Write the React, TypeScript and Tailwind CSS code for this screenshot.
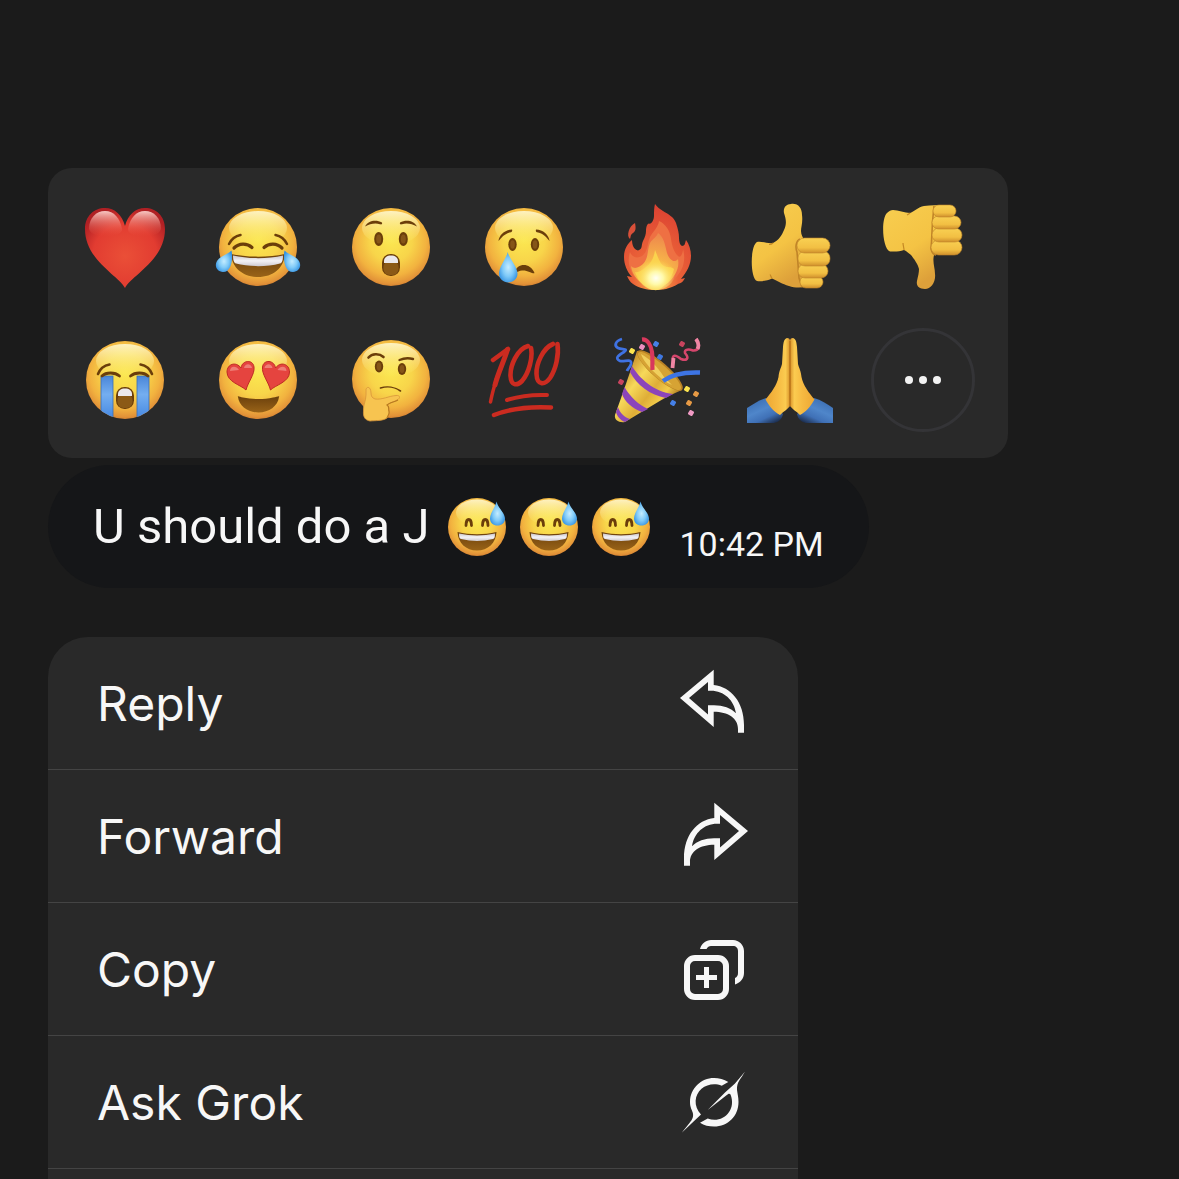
import type { ReactNode } from 'react'

const BROWN = '#6b3e0a'

// gradients shared by all the emoji drawings
function Gradients() {
  return (
    <svg className="absolute h-0 w-0" aria-hidden="true">
      <defs>
        <radialGradient id="face" cx="0.5" cy="0.42" r="0.6">
          <stop offset="0" stopColor="#fbe750" />
          <stop offset="0.45" stopColor="#f8d54a" />
          <stop offset="0.75" stopColor="#f2b23f" />
          <stop offset="0.92" stopColor="#e29238" />
          <stop offset="1" stopColor="#c9772c" />
        </radialGradient>
        <linearGradient id="shine" x1="0" y1="0" x2="0" y2="1">
          <stop offset="0" stopColor="#fffbd8" stopOpacity="0.85" />
          <stop offset="1" stopColor="#fff27a" stopOpacity="0" />
        </linearGradient>
        <radialGradient id="heart" cx="0.5" cy="0.6" r="0.62">
          <stop offset="0" stopColor="#ea4f37" />
          <stop offset="0.65" stopColor="#e23c31" />
          <stop offset="1" stopColor="#b02024" />
        </radialGradient>
        <linearGradient id="heartShine" x1="0" y1="0" x2="0" y2="1">
          <stop offset="0" stopColor="#ffd9d4" stopOpacity="0.9" />
          <stop offset="1" stopColor="#ea4f3c" stopOpacity="0" />
        </linearGradient>
        <radialGradient id="tear" cx="0.5" cy="0.5" r="0.6">
          <stop offset="0" stopColor="#c4ecff" />
          <stop offset="0.5" stopColor="#7fcaf8" />
          <stop offset="1" stopColor="#2b8ce0" />
        </radialGradient>
        <linearGradient id="stream" x1="0" y1="0" x2="0" y2="1">
          <stop offset="0" stopColor="#4a86d8" />
          <stop offset="0.4" stopColor="#74aef0" />
          <stop offset="1" stopColor="#3f83e0" />
        </linearGradient>
        <linearGradient id="teeth" x1="0" y1="0" x2="0" y2="1">
          <stop offset="0" stopColor="#c9c6cc" />
          <stop offset="0.5" stopColor="#f4f2f5" />
          <stop offset="1" stopColor="#cfcbd2" />
        </linearGradient>
        <linearGradient id="mouth" x1="0" y1="0" x2="0" y2="1">
          <stop offset="0" stopColor="#6b400c" />
          <stop offset="1" stopColor="#996318" />
        </linearGradient>
        <linearGradient id="skin" x1="0" y1="0" x2="0.5" y2="1">
          <stop offset="0" stopColor="#f8ce50" />
          <stop offset="0.6" stopColor="#f4c344" />
          <stop offset="1" stopColor="#dda03a" />
        </linearGradient>
        <linearGradient id="finger" x1="0" y1="0" x2="0" y2="1">
          <stop offset="0" stopColor="#f9d153" />
          <stop offset="0.65" stopColor="#f2bf43" />
          <stop offset="1" stopColor="#cf8f2c" />
        </linearGradient>
        <radialGradient id="flame" cx="0.47" cy="0.88" r="0.85">
          <stop offset="0" stopColor="#f9b64a" />
          <stop offset="0.4" stopColor="#ea6238" />
          <stop offset="1" stopColor="#dc4232" />
        </radialGradient>
        <radialGradient id="flameMid" cx="0.5" cy="0.9" r="0.85">
          <stop offset="0" stopColor="#fdf06a" />
          <stop offset="0.45" stopColor="#f8b649" />
          <stop offset="1" stopColor="#ee8a4c" />
        </radialGradient>
        <radialGradient id="flameCore" cx="0.5" cy="0.65" r="0.55">
          <stop offset="0" stopColor="#fffff4" />
          <stop offset="0.35" stopColor="#fff9a8" />
          <stop offset="1" stopColor="#fbd94c" stopOpacity="0" />
        </radialGradient>
        <linearGradient id="cone" x1="0.1" y1="0.3" x2="0.75" y2="0.85">
          <stop offset="0" stopColor="#c9922d" />
          <stop offset="0.3" stopColor="#f7d95a" />
          <stop offset="0.6" stopColor="#dfae37" />
          <stop offset="0.8" stopColor="#f2cb4a" />
          <stop offset="1" stopColor="#a9741f" />
        </linearGradient>
        <linearGradient id="palm" x1="0" y1="0" x2="1" y2="0">
          <stop offset="0" stopColor="#eda733" />
          <stop offset="0.5" stopColor="#f6ba42" />
          <stop offset="0.82" stopColor="#fbcb50" />
          <stop offset="1" stopColor="#d99229" />
        </linearGradient>
        <linearGradient id="sleeve" x1="0.2" y1="0.1" x2="0.8" y2="1">
          <stop offset="0" stopColor="#3c6fb4" />
          <stop offset="0.4" stopColor="#4f86ca" />
          <stop offset="0.7" stopColor="#3f70b6" />
          <stop offset="1" stopColor="#1b2a48" />
        </linearGradient>
        <clipPath id="faceClip">
          <circle cx="45" cy="45" r="39" />
        </clipPath>
      </defs>
    </svg>
  )
}

function Emoji({ children }: { children: ReactNode }) {
  return (
    <svg viewBox="0 0 90 90" className="h-[90px] w-[90px]" aria-hidden="true">
      {children}
    </svg>
  )
}

function Face({ cy = 45 }: { cy?: number }) {
  return (
    <>
      <circle cx="45" cy={cy} r="39" fill="url(#face)" />
      <ellipse cx="45" cy={cy - 19} rx="29" ry="17" fill="url(#shine)" />
    </>
  )
}

function Heart() {
  return (
    <Emoji>
      <path d="M45 86C38 73 5 58 5 27C5 14 14 6 25 6C35 6 42 13 45 24C48 13 55 6 65 6C76 6 85 14 85 27C85 58 52 73 45 86Z" fill="url(#heart)" />
      <path d="M9 27C9 16 16 9 25 9C34 9 40 16 42 27C43 36 12 38 9 27Z" fill="url(#heartShine)" />
      <path d="M81 27C81 16 74 9 65 9C56 9 50 16 48 27C47 36 78 38 81 27Z" fill="url(#heartShine)" />
    </Emoji>
  )
}

function Joy() {
  return (
    <Emoji>
      <Face />
      <g fill="none" stroke={BROWN} strokeLinecap="round">
        <path d="M16 42C18 38 22 34 27.500 33" strokeWidth="2.500" />
        <path d="M74 42C72 38 68 34 62.500 33" strokeWidth="2.500" />
        <path d="M21 46C26 41 34 41 39 45.500" strokeWidth="3.200" />
        <path d="M69 46C64 41 56 41 51 45.500" strokeWidth="3.200" />
      </g>
      <path d="M18 52C34 55.500 56 55.500 72 52C71 66 60 75 45 75C30 75 19 66 18 52Z" fill="url(#mouth)" />
      <path d="M20 53.500C35 57 55 57 70 53.500C70 58 69 61 67 61.500C54 65 36 65 23 61.500C21 61 20 58 20 53.500Z" fill="url(#teeth)" />
      <path d="M18.500 48.500C20 56 19 70 10 70C4 70 1 64 4 59C7 54 14 53 18.500 48.500Z" fill="url(#tear)" />
      <path d="M71.500 48.500C70 56 71 70 80 70C86 70 89 64 86 59C83 54 76 53 71.500 48.500Z" fill="url(#tear)" />
    </Emoji>
  )
}

function OpenMouth() {
  return (
    <>
      <rect x="36" y="52" width="18" height="22" rx="8.500" fill={BROWN} />
      <rect x="37.500" y="59" width="15" height="14" rx="6" fill="#8b5916" />
      <path d="M38 61V59C38 55.500 41 53.500 45 53.500C49 53.500 52 55.500 52 59V61Z" fill="#ebe8ec" />
    </>
  )
}

function Astonished() {
  return (
    <Emoji>
      <Face />
      <path d="M19 24.500C22 18.500 30 17 36 20.500C36.500 22.500 35.500 22.500 34 22.300C29 20.500 24 22 19 24.500Z" fill={BROWN} />
      <path d="M71 24.500C68 18.500 60 17 54 20.500C53.500 22.500 54.500 22.500 56 22.300C61 20.500 66 22 71 24.500Z" fill={BROWN} />
      <ellipse cx="32.700" cy="37" rx="4.500" ry="7" fill={BROWN} />
      <ellipse cx="57.300" cy="37" rx="4.500" ry="7" fill={BROWN} />
      <ellipse cx="32.700" cy="37" rx="2.500" ry="4.500" fill="#855518" />
      <ellipse cx="57.300" cy="37" rx="2.500" ry="4.500" fill="#855518" />
      <OpenMouth />
    </Emoji>
  )
}

function Cry() {
  return (
    <Emoji>
      <Face />
      <path d="M19.500 39C20 33 26 27.500 33 27.500C33.500 29 33 30 32 30.300C26 31 22 36 19.500 39Z" fill={BROWN} />
      <path d="M70.500 39C70 33 64 27.500 57 27.500C56.500 29 57 30 58 30.300C64 31 68 36 70.500 39Z" fill={BROWN} />
      <ellipse cx="33.500" cy="42.500" rx="4.200" ry="6.500" fill={BROWN} />
      <ellipse cx="56" cy="42.500" rx="4.200" ry="6.500" fill={BROWN} />
      <ellipse cx="33.500" cy="42.500" rx="2.300" ry="4.200" fill="#855518" />
      <ellipse cx="56" cy="42.500" rx="2.300" ry="4.200" fill="#855518" />
      <path d="M36 70C38 61 51 60 55.500 71C54.500 72.500 49 68 43 68.500C40 68.700 37 71 36 70Z" fill={BROWN} />
      <path d="M28.700 50C30 56 38.500 65 38.500 71.500C38.500 77 34 80.500 29.300 80.500C24.500 80.500 20 77 20 71.500C20 65 27.500 56 28.700 50Z" fill="url(#tear)" />
    </Emoji>
  )
}

function Fire() {
  return (
    <Emoji>
      <path d="M43 2C45 5 48 7 51 9C56 12 62 15 64 21C66 27 67 31 67 36C67 40 68 43 70 44C73 44 73 41 74 38C77 42 79 48 79 54C79 62 75 70 69 77L73 76C71 80 69 81 66 82C58 87 50 88 43 88C35 88 27 86 21 82C18 80 17 78 15 74L20 75C15 70 12 62 12 55C12 48 15 42 20 38C20 43 22 48 26 48.500C31 47 29 43 31 39C33 35 34 32 34 29C34 25 35 22 37 21.500C39 23 42 18 42 14C42 9 42 6 43 2Z" fill="url(#flame)" />
      <path d="M47 19C54 22 58 29 59 37C60 44 62 50 66 54C69 57 71 50 71 47C74 58 71 67 66 73C60 82 50 85 43 86C34 86 24 79 20 71C16 63 16 57 18 50C20 55 25 57 30 54C36 50 35 42 38 35C41 29 46 26 47 19Z" fill="#ee7043" />
      <path d="M46 31C52 35 53 43 55 51C57 57 62 62 66 57C68 67 62 75 56 81C50 86 38 87 31 82C25 78 20 72 19 64C23 68 27 65 31 62C37 56 35 47 38 41C41 36 45 35 46 31Z" fill="url(#flameMid)" />
      <path d="M43 48C46 55 48 62 52 64C56 66 58 64 62 67C60 76 54 83 48 87C45 89 41 88 38 87C31 84 25 77 23 70C27 71 30 68 34 65C39 61 42 56 43 48Z" fill="#fbd24e" />
      <ellipse cx="44" cy="71" rx="19" ry="17" fill="url(#flameCore)" />
      <path d="M23 21C24 26 24 29 21 31C18 33 19 35 18 37C14 34 17 24 23 21Z" fill="#d95039" />
    </Emoji>
  )
}

function ThumbsUp() {
  return (
    <Emoji>
      <path d="M46 2C53 1 57 6 57 13C58 20 56 25 56 29C56 33 58 35 59 38L64 84C57 86 50 86 44 84C37 82 33 79 27 76.500C23 79 16 79.500 12 79C5 76 5 44 12 40C17 39 23 42 28 41C34 38 37 33 39 28C42 22 41 17 39 11C38 6 41 2 46 2Z" fill="url(#skin)" />
      <path d="M28 41C27 42 25 42.500 24 42.500M27 76.500C26 75 26 74 25 72.500" stroke="#c48824" strokeWidth="1.200" fill="none" />
      <path d="M55 37C51 39 50 45 52 50L53 62L54 76L57 85" stroke="#c08428" strokeWidth="1.600" fill="none" />
      <rect x="55" y="74" width="23" height="12" rx="6" fill="url(#finger)" stroke="#c08428" strokeWidth="0.600" />
      <rect x="53" y="62" width="30" height="14" rx="7" fill="url(#finger)" stroke="#c08428" strokeWidth="0.600" />
      <rect x="53" y="49" width="32" height="15" rx="7" fill="url(#finger)" stroke="#c08428" strokeWidth="0.600" />
      <rect x="52" y="36" width="33" height="15" rx="7.500" fill="url(#finger)" stroke="#c08428" strokeWidth="0.600" />
    </Emoji>
  )
}

function ThumbsDown() {
  return (
    <Emoji>
      <path d="M15 8C20 8 27 11 32 11C37 9 40 5 46 4C53 3 60 3 66 3L64 46C58 48 56 51 55.500 56C55 62 57 66 57 72C58 80 53 87 47 87C41 87 38 84 39 79C40 74 41 71 41 67C40 62 36 57 33 53C30 51 29 49 26 48C21 50 16 49.500 12 49.500C4 46 3 16 9 11C11 9 13 8 15 8Z" fill="url(#skin)" />
      <path d="M32 11C31 12 30 12.500 29 13M26 48C26 46 25 43 25 41" stroke="#c48824" strokeWidth="1.200" fill="none" />
      <path d="M56 4L54.500 20L53.500 40L53 47C54 51 56 53 58 53" stroke="#c08428" strokeWidth="1.600" fill="none" />
      <rect x="53" y="38" width="31" height="15" rx="7.500" fill="url(#finger)" stroke="#c08428" strokeWidth="0.600" />
      <rect x="54" y="26" width="30" height="14" rx="7" fill="url(#finger)" stroke="#c08428" strokeWidth="0.600" />
      <rect x="54" y="14" width="29" height="13" rx="6.500" fill="url(#finger)" stroke="#c08428" strokeWidth="0.600" />
      <rect x="55" y="3" width="23" height="12" rx="6" fill="url(#finger)" stroke="#c08428" strokeWidth="0.600" />
    </Emoji>
  )
}

function Sob() {
  return (
    <Emoji>
      <Face />
      <g clipPath="url(#faceClip)">
        <rect x="21" y="41" width="12" height="46" fill="url(#stream)" stroke="#3b6fb4" strokeWidth="0.800" />
        <rect x="57" y="41" width="12" height="46" fill="url(#stream)" stroke="#3b6fb4" strokeWidth="0.800" />
      </g>
      <g fill="none" stroke={BROWN} strokeLinecap="round">
        <path d="M18 39C20 34 24 30.500 29.500 29.500" strokeWidth="2.600" />
        <path d="M72 39C70 34 66 30.500 60.500 29.500" strokeWidth="2.600" />
        <path d="M22 41C26 37 35 37 39.500 41" strokeWidth="2.800" />
        <path d="M68 41C64 37 55 37 50.500 41" strokeWidth="2.800" />
      </g>
      <OpenMouth />
    </Emoji>
  )
}

const SMALL_HEART = 'M33 55C28 50 14 47 14 37C14 29 23 26 28 33C29 25 40 24 41 32C42 39 35 47 33 55Z'

function HeartEyes() {
  return (
    <Emoji>
      <Face />
      <g>
        <path d={SMALL_HEART} fill="#e5443f" stroke="#bd2c23" strokeWidth="1" />
        <path d="M17 36C17 31 23 30 26 35ZM31 33C32 28 38 28 39 33Z" fill="#ee7d76" />
      </g>
      <g transform="translate(90.500 0) scale(-1 1)">
        <path d={SMALL_HEART} fill="#e5443f" stroke="#bd2c23" strokeWidth="1" />
        <path d="M17 36C17 31 23 30 26 35ZM31 33C32 28 38 28 39 33Z" fill="#ee7d76" />
      </g>
      <path d="M25 62C24 60 27 62 30 62.500C40 64.500 51 64.500 60 62.500C64 62 67 60 66 62C65 71 56 77.500 45.500 77.500C35 77.500 26 71 25 62Z" fill="url(#mouth)" />
    </Emoji>
  )
}

function Thinking() {
  return (
    <Emoji>
      <Face cy={44} />
      <g fill="none" stroke={BROWN} strokeLinecap="round">
        <path d="M22.500 22.500C26 18.500 33 18 37.500 22" strokeWidth="2.600" />
        <path d="M53.500 25C57 23.500 63 23 67 24" strokeWidth="2.400" />
      </g>
      <ellipse cx="33" cy="31.500" rx="4.200" ry="6" fill={BROWN} />
      <ellipse cx="56" cy="34" rx="4.200" ry="6" fill={BROWN} />
      <ellipse cx="33" cy="31.500" rx="2.300" ry="4" fill="#855518" />
      <ellipse cx="56" cy="34" rx="2.300" ry="4" fill="#855518" />
      <path d="M34.500 53C41 51 49 52 54.500 56" fill="none" stroke={BROWN} strokeWidth="1.600" strokeLinecap="round" />
      <path d="M20 54C22 50.500 25 53 25 58C25 61 26 63 29 64C36 65 43 61 50 60.500C54 60 55 63 51 65C48 67 43 68 41 70C44 72 42 74 43 76C44 79 42 80 41 83C37 86 29 85.500 24 86C19 85 17 82 17.500 76C17 70 20 66 20 60Z" fill="#f7c450" stroke="#d8953a" strokeWidth="0.800" />
      <path d="M52 65C48 67 43 68 41 70C44 72 42 74 43 76C44 79 42 80 41 83" fill="none" stroke="#b87a20" strokeWidth="1.200" />
    </Emoji>
  )
}

function Hundred() {
  return (
    <Emoji>
      <g fill="none" stroke="#cb2b20" strokeLinecap="round" strokeLinejoin="round">
        <path d="M14 25L29 14" strokeWidth="4.500" />
        <path d="M28.500 14.500C25 26 19 38 16 50" strokeWidth="5" />
        <path d="M18 42C15 52 13 59 11.500 67" strokeWidth="3.500" />
        <path d="M49 11C38 14 31 31 31.500 41C32 51 38 51 43 46C50 38 54 22 52 13" strokeWidth="4.600" />
        <path d="M74 9C64 13 57 29 57.500 39C58 51 66 50 71 43C77 34 80 20 78.500 9" strokeWidth="4.600" />
        <path d="M28 65C40 61 54 59.500 68 60" strokeWidth="4" />
        <path d="M15 80C33 73 54 71.500 72 72.500" strokeWidth="4.500" />
      </g>
    </Emoji>
  )
}

const CONFETTI = [
  { x: 20, y: 16, color: '#fbe44f' },
  { x: 30, y: 12, color: '#ec8fc0' },
  { x: 44, y: 9, color: '#4580e8' },
  { x: 48, y: 22, color: '#3f78e0' },
  { x: 70, y: 9, color: '#c8445e' },
  { x: 9, y: 47, color: '#c8445e' },
  { x: 75, y: 54, color: '#fbe44f' },
  { x: 84, y: 59, color: '#e79a45' },
  { x: 77, y: 68, color: '#e79a45' },
  { x: 61, y: 68, color: '#4580e8' },
  { x: 79, y: 78, color: '#f09ac4' },
]

function Party() {
  return (
    <Emoji>
      <path d="M25 16C32 16 71 46 70 55C50 63 32 76 13 87C7 88 2 85 3 80C10 60 18 38 25 16Z" fill="url(#cone)" />
      <path d="M20 31C27 43 42 57 61 59L54 63C38 60 25 50 18 37Z" fill="#8c45ba" />
      <path d="M12.500 52C18 62 27 70 36 74L30 77C20 73 13 67 10 59Z" fill="#8c45ba" />
      <path d="M6 72C8 78 12 82 18 84L13 87C8 85 5 81 4 77Z" fill="#8c45ba" />
      <ellipse cx="48" cy="35.500" rx="29.500" ry="8" transform="rotate(41 48 35.500)" fill="#b98224" />
      <ellipse cx="47.500" cy="36" rx="28" ry="6.800" transform="rotate(41 47.500 36)" fill="#d6a334" />
      <path d="M29 19C38 24 45 31 52 42L60 50C50 46 32 29 29 19Z" fill="#f0cf5d" />
      <g fill="none">
        <path d="M10 4C3 6 2 11 6 13C10 15 17 13 12 17C7 20 2 23 8 26C13 27 20 23 19 29C18 33 16 33 15 36" stroke="#3f72e2" strokeWidth="2.800" />
        <path d="M30 4.500C36 4 39 11 40 17C41 24 40 29 40.500 35" stroke="#d8385c" strokeWidth="4.200" />
        <path d="M51 46C60 39 74 37 88 37.500" stroke="#3d74e4" strokeWidth="4.500" />
        <path d="M84 4C89 10 87 16 81 15.500C77 14 72 14 73 18C78 24 74 26 69 24C63 19 60 20 61 25L60.500 33" stroke="#d5466c" strokeWidth="2.600" />
        <path d="M84 4C87 8 87 11 85.500 14M61.500 23L60.500 33" stroke="#ef86a4" strokeWidth="3.800" />
      </g>
      {CONFETTI.map((c) => (
        <rect key={`${c.x}-${c.y}`} x={c.x - 2.5} y={c.y - 2.5} width="5" height="5" rx="1" fill={c.color} transform={`rotate(30 ${c.x} ${c.y})`} />
      ))}
    </Emoji>
  )
}

function PrayHalf() {
  return (
    <>
      <path d="M21 63C14 65 8 69 2 73V88H29C34 87 37 84 38 79Z" fill="url(#sleeve)" />
      <path d="M42 3C39 4 38.500 7 38 12L37 29C36 33 34 36 33.500 42C32 50 26 58 20.500 64.500C25 72 29 77 35 80C39 76 43 74 45 71V6C45 4 44 3 42 3Z" fill="url(#palm)" />
    </>
  )
}

function Pray() {
  return (
    <Emoji>
      <PrayHalf />
      <g transform="translate(90 0) scale(-1 1)">
        <PrayHalf />
      </g>
      <path d="M45 6V71" stroke="#b06a14" strokeWidth="1.200" />
    </Emoji>
  )
}

function SweatSmile() {
  return (
    <svg viewBox="0 0 60 60" className="h-[60px] w-[60px]" role="img" aria-label="sweat smile">
      <circle cx="30" cy="30" r="29" fill="url(#face)" />
      <ellipse cx="30" cy="15.500" rx="21" ry="13" fill="url(#shine)" />
      <path d="M19 28.500C19 20.500 24.500 20.500 24.500 28.500" fill="none" stroke={BROWN} strokeWidth="2.800" strokeLinecap="round" />
      <path d="M35.500 28.500C35.500 20.500 41 20.500 41 28.500" fill="none" stroke={BROWN} strokeWidth="2.800" strokeLinecap="round" />
      <path d="M10.500 35C23 38 37 38 49.500 35C49 46 41 53.500 30 53.500C19 53.500 11 46 10.500 35Z" fill="url(#mouth)" />
      <path d="M12 36.500C24 39 36 39 48 36.500C48 40 47.500 41.500 46 42C35 44.500 25 44.500 14 42C12.500 41.500 12 40 12 36.500Z" fill="url(#teeth)" />
      <path d="M49.500 4.500C51 11 58 16 58 21.500C58 26 54.500 28.500 50.500 28.500C46.500 28.500 43 26 43 21.500C43 16 48 11 49.500 4.500Z" fill="url(#tear)" />
    </svg>
  )
}

function MenuIcon({ children, flip = false }: { children: ReactNode; flip?: boolean }) {
  return (
    <svg viewBox="0 0 72 72" className="h-[72px] w-[72px]" fill="#f7f7f7" fillRule="evenodd" aria-hidden="true">
      <g transform={flip ? 'translate(72 0) scale(-1 1)' : undefined}>{children}</g>
    </svg>
  )
}

const ARROW =
  'M2 31L35.700 2.700V18C53 20 66 35 66 58V65.700H60V62C60 51 50 44.700 35.700 44.700V60ZM11 31L30 47.500V38.300H36C45 38.300 53 41 58 46.300C56 33 46 23.700 33 23.700H30V15Z'

const reactions = [
  { name: 'Heart', icon: <Heart /> },
  { name: 'Tears of joy', icon: <Joy /> },
  { name: 'Astonished', icon: <Astonished /> },
  { name: 'Crying', icon: <Cry /> },
  { name: 'Fire', icon: <Fire /> },
  { name: 'Thumbs up', icon: <ThumbsUp /> },
  { name: 'Thumbs down', icon: <ThumbsDown /> },
  { name: 'Sobbing', icon: <Sob /> },
  { name: 'Heart eyes', icon: <HeartEyes /> },
  { name: 'Thinking', icon: <Thinking /> },
  { name: 'Hundred points', icon: <Hundred /> },
  { name: 'Party popper', icon: <Party /> },
  { name: 'Folded hands', icon: <Pray /> },
]

const actions = [
  { label: 'Reply', icon: <MenuIcon><path d={ARROW} /></MenuIcon> },
  { label: 'Forward', icon: <MenuIcon flip><path d={ARROW} /></MenuIcon> },
  {
    label: 'Copy',
    icon: (
      <MenuIcon>
        <rect x="9" y="25" width="39" height="39" rx="8" fill="none" stroke="#f7f7f7" strokeWidth="6" />
        <path d="M26 34H31V42H39V47H31V55H26V47H18V42H26Z" />
        <path d="M22 16C23.500 10.500 28 7 33 7H55C61 7 66 12 66 18V40C66 45.500 62 50 57 51.500V45C59 44 60 42.500 60 40V18C60 15 58 13 55 13H33C31 13 29.500 14 28.500 16Z" />
      </MenuIcon>
    ),
  },
  {
    label: 'Ask Grok',
    icon: (
      <MenuIcon>
        <path d="M50.300 16C46 13.500 41 12 36 12C23 12 12 22.500 12 36C12 41 13.500 43 14.700 46.500C16 51 14 54 11.500 57L3.700 66.700L23 48.500C15 40 16.500 29 23.500 22.800C29 18 37 17 43.700 19.700Z" />
        <path d="M29.700 44L47 26.500L57 17.500C60 14 63 10.500 67 5.500C63 13 58.500 16 59 24C59.500 28 60.500 31 60.500 36C60.500 50 50 60.500 36 60.500C31 60.500 26 59.500 22 56.700L29.700 52.500C44 58 59 45 52.500 28.500C51.500 27 50 28 48.500 29.200Z" />
      </MenuIcon>
    ),
  },
]

export default function App() {
  return (
    <main className="flex h-screen flex-col items-start overflow-hidden bg-[#1b1b1b] px-12 pt-[168px] font-['Inter',sans-serif] text-[#f7f7f7]">
      <Gradients />

      {/* Reactions */}
      <div className="grid shrink-0 grid-cols-7 gap-[29px] rounded-3xl bg-[#292929] pt-[27px] pr-[33px] pb-[26px] pl-[25px]">
        {reactions.map((r) => (
          <button key={r.name} type="button" aria-label={r.name} className="flex h-[104px] w-[104px] items-center justify-center">
            {r.icon}
          </button>
        ))}
        <button type="button" aria-label="More reactions" className="flex h-[104px] w-[104px] items-center justify-center gap-[6px] rounded-full border-3 border-[#343437]">
          <span className="h-2 w-2 rounded-full bg-[#f2f2f2]" />
          <span className="h-2 w-2 rounded-full bg-[#f2f2f2]" />
          <span className="h-2 w-2 rounded-full bg-[#f2f2f2]" />
        </button>
      </div>

      {/* Message */}
      <div className="mt-[7px] flex h-[123px] shrink-0 items-center rounded-full bg-[#151618] pr-[45px] pl-[45px] font-['Roboto',sans-serif]">
        <p className="flex items-center text-[49px] leading-[60px] whitespace-nowrap">
          U should do a J
          <span className="ml-[18px] flex gap-3">
            <SweatSmile />
            <SweatSmile />
            <SweatSmile />
          </span>
        </p>
        <time className="mt-[34px] ml-[28px] text-[34px] leading-[42px] whitespace-nowrap">10:42 PM</time>
      </div>

      {/* Actions */}
      <ul className="mt-[49px] w-full max-w-[750px] grow rounded-t-[40px] bg-[#292929]">
        {actions.map((a) => (
          <li key={a.label} className="border-b border-[#444444]">
            <button type="button" className="flex h-[132px] w-full items-center justify-between pr-[48px] pl-[49px] text-left text-[48px] leading-[60px]">
              <span className="pt-[2px]">{a.label}</span>
              {a.icon}
            </button>
          </li>
        ))}
      </ul>
    </main>
  )
}
